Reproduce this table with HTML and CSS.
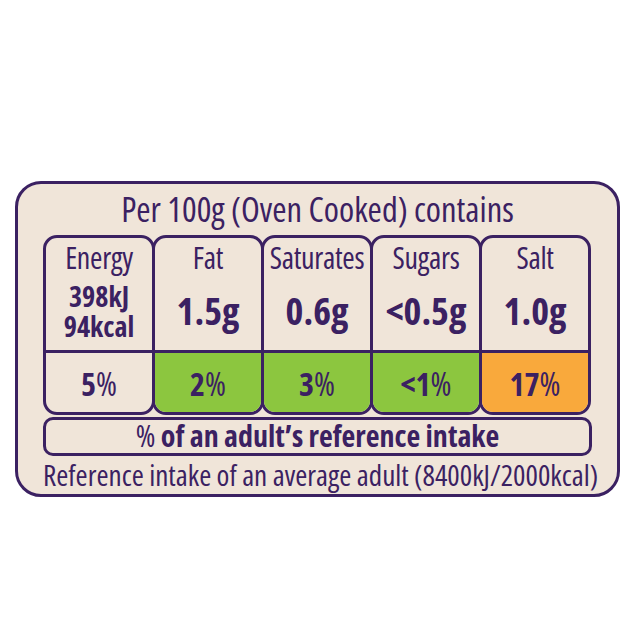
FILE: index.html
```html
<!DOCTYPE html>
<html lang="en">
  <head>
    <meta charset="UTF-8" />
    <meta name="viewport" content="width=device-width, initial-scale=1.0" />
    <title>Nutrition Label</title>
    <link rel="stylesheet" href="styles.css">
  </head>
  <body>
    <div class="label">
      <div class="title">Per 100g (Oven Cooked) contains</div>
      <div class="cols">
        <div class="col">
          <div class="top">
            <div class="name">Energy</div>
            <div class="value energy">
              <div>398kJ</div>
              <div>94kcal</div>
            </div>
          </div>
          <div class="pct">5<span>%</span></div>
        </div>
        <div class="col">
          <div class="top">
            <div class="name">Fat</div>
            <div class="value">1.5g</div>
          </div>
          <div class="pct green">2<span>%</span></div>
        </div>
        <div class="col">
          <div class="top">
            <div class="name">Saturates</div>
            <div class="value">0.6g</div>
          </div>
          <div class="pct green">3<span>%</span></div>
        </div>
        <div class="col">
          <div class="top">
            <div class="name">Sugars</div>
            <div class="value">&lt;0.5g</div>
          </div>
          <div class="pct green">&lt;1<span>%</span></div>
        </div>
        <div class="col">
          <div class="top">
            <div class="name">Salt</div>
            <div class="value">1.0g</div>
          </div>
          <div class="pct amber">17<span>%</span></div>
        </div>
      </div>
      <div class="ri"><span>%</span> of an adult’s reference intake</div>
      <div class="foot">Reference intake of an average adult (8400kJ/2000kcal)</div>
    </div>
  </body>
</html>
```
FILE: styles.css
```css
body {
  margin: 0;
  background: #fff;
  font-family: "Open Sans", "DejaVu Sans", sans-serif;
  font-stretch: 75%;
  color: #3b2162;
}
.label {
  box-sizing: border-box;
  width: 605px;
  height: 316px;
  margin: 181px 0 0 15px;
  padding: 0 25px;
  border: 3px solid #3b2162;
  border-radius: 26px;
  background: #f0e5d9;
}
.title {
  height: 51px;
  line-height: 49px;
  font-size: 34.5px;
  text-align: center;
  white-space: nowrap;
}
.cols {
  display: flex;
}
.col {
  box-sizing: border-box;
  width: 112px;
  height: 180px;
  border: 3px solid #3b2162;
  border-radius: 14px;
  overflow: hidden;
  display: flex;
  flex-direction: column;
}
.col + .col {
  margin-left: -3px;
}
.top {
  height: 115px;
  box-sizing: border-box;
  border-bottom: 3px solid #3b2162;
  padding-top: 5px;
  display: flex;
  flex-direction: column;
  align-items: center;
}
.name {
  font-size: 30px;
  line-height: 30px;
  letter-spacing: -0.3px;
  white-space: nowrap;
}
.value {
  flex: 1;
  display: flex;
  align-items: center;
  justify-content: center;
  text-align: center;
  font-weight: 700;
  font-size: 38px;
  padding-bottom: 4px;
}
.value.energy {
  flex-direction: column;
  font-size: 28px;
  line-height: 30px;
  padding: 4px 0 6px;
}
.pct {
  flex: 1;
  display: flex;
  align-items: center;
  justify-content: center;
  font-size: 32px;
  font-weight: 700;
  padding-top: 2px;
}
.pct span,
.ri span {
  font-weight: 400;
}
.green {
  background: #8cc63f;
}
.amber {
  background: #f9a93c;
}
.ri {
  box-sizing: border-box;
  height: 39px;
  margin-top: 2px;
  border: 3px solid #3b2162;
  border-radius: 10px;
  text-align: center;
  font-size: 30px;
  font-weight: 700;
  line-height: 32px;
  white-space: nowrap;
}
.foot {
  text-align: center;
  font-size: 29.2px;
  line-height: 38px;
  white-space: nowrap;
}
```
